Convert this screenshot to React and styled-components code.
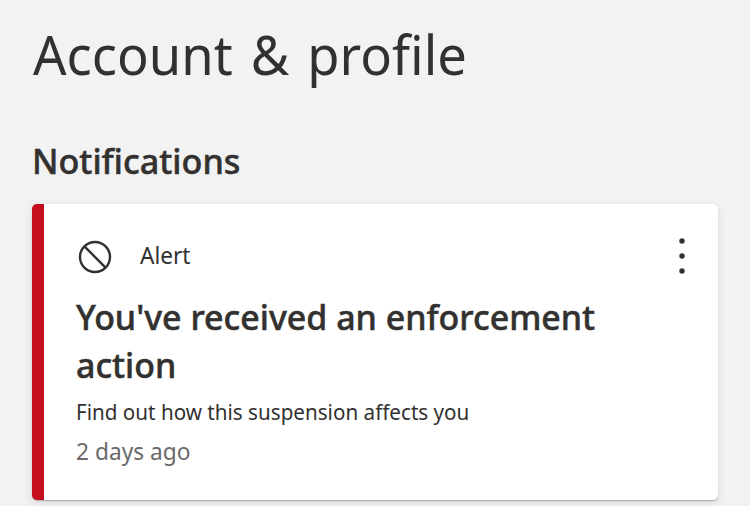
// dependencies
import React from 'react'
import styled, { createGlobalStyle } from 'styled-components'

// global styles
const GlobalStyle = createGlobalStyle`
    * {
        box-sizing: border-box;
    }
    body {
        margin: 0;
        background-color: #f2f2f2;
        color: #323130;
        font-family: "Noto Sans", "Open Sans", sans-serif;
    }
`

// styled components
const Container = styled.main`
    height: 506px;
    padding: 16px 32px 0;
    overflow: hidden;
`

const Line = styled.span`
    display: block;
    width: max-content;
    white-space: nowrap;
    transform-origin: left center;
    transform: scaleX(${props => props.$stretch || 1});
`

const PageTitle = styled.h1`
    margin: 0;
    padding-left: 1px;
    font-size: 54px;
    font-weight: 400;
    line-height: 76px;
    word-spacing: 4.5px;
`

const SectionTitle = styled.h2`
    margin: 45px 0 19px;
    font-size: 35px;
    font-weight: 500;
    line-height: 48px;
    -webkit-text-stroke: 0.5px currentColor;
`

const Card = styled.article`
    height: 296px;
    padding: 32px 26px 0 32px;
    border-left: 12px solid #c50f1f;
    border-radius: 5px;
    background-color: #fff;
    box-shadow: 0 1px 1px rgba(0, 0, 0, 0.24), 0 3px 10px rgba(0, 0, 0, 0.1);
`

const CardHeader = styled.div`
    display: flex;
    align-items: center;
    height: 40px;
`

const BlockIcon = styled.svg`
    width: 36px;
    height: 36px;
    margin: 2px 27px 0 1px;
`

const Label = styled.span`
    margin-top: -2px;
    font-size: 23px;
    line-height: 40px;
`

const MenuButton = styled.button`
    display: flex;
    width: 20px;
    height: 40px;
    margin-left: auto;
    padding: 0;
    border: 0;
    background: none;
    color: inherit;
`

const Heading = styled.h3`
    margin: 17px 0 0;
    font-size: 35px;
    font-weight: 500;
    line-height: 48px;
    -webkit-text-stroke: 0.5px currentColor;
`

const Description = styled.p`
    margin: 7px 0 0;
    font-size: 21.5px;
    line-height: 32px;
`

const Time = styled.p`
    margin: 7px 0 0;
    color: #6a6a6a;
    font-size: 23px;
    line-height: 32px;
`

// notification page
const App = () => {
    return (
        <Container>
            <GlobalStyle />
            <PageTitle><Line $stretch={0.973}>Account &amp; profile</Line></PageTitle>
            <SectionTitle><Line $stretch={0.975}>Notifications</Line></SectionTitle>
            <Card>
                <CardHeader>
                    <BlockIcon viewBox="0 0 36 36" fill="none" stroke="currentColor" strokeWidth="2.4">
                        <circle cx="18" cy="18" r="15" />
                        <path d="M7.4 7.4 28.6 28.6" />
                    </BlockIcon>
                    <Label><Line $stretch={0.98}>Alert</Line></Label>
                    <MenuButton aria-label="More options">
                        <svg width="20" height="40" fill="currentColor">
                            <circle cx="10" cy="5" r="2.7" />
                            <circle cx="10" cy="20" r="2.7" />
                            <circle cx="10" cy="35" r="2.7" />
                        </svg>
                    </MenuButton>
                </CardHeader>
                <Heading>
                    <Line $stretch={0.97}>You've received an enforcement</Line>
                    <Line $stretch={0.97}>action</Line>
                </Heading>
                <Description><Line $stretch={0.96}>Find out how this suspension affects you</Line></Description>
                <Time><Line $stretch={0.988}>2 days ago</Line></Time>
            </Card>
        </Container>
    )
}

export default App
